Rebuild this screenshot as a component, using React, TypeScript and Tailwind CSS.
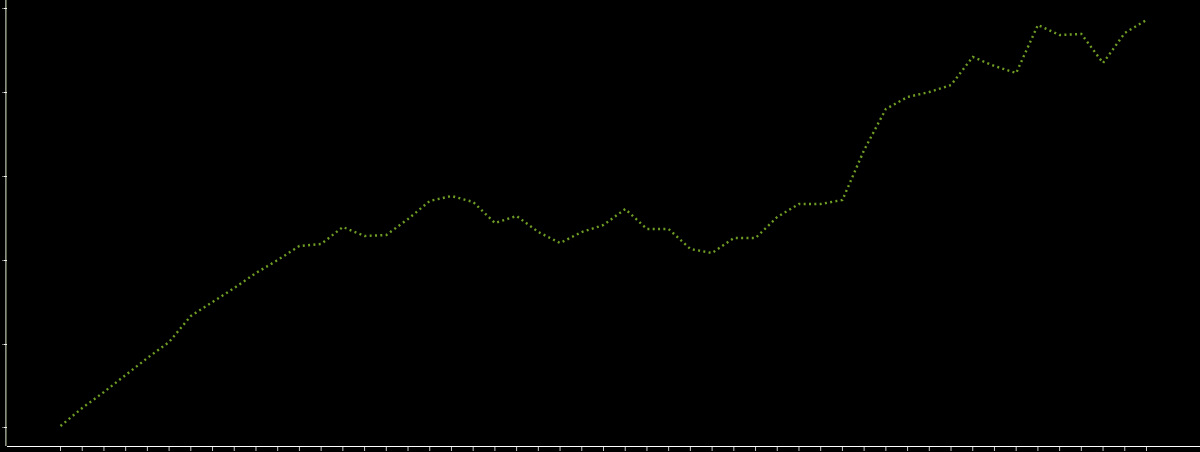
const VALUES = [
  426, 408, 392, 375, 358, 342, 316, 302, 288, 273, 260, 246, 244, 227, 236, 235, 219, 201, 196, 202, 223, 216, 232, 243, 232,
  225, 209, 229, 229, 249, 253, 238, 238, 217, 204, 204, 200, 150, 109, 97, 92, 85, 57, 66, 73, 25, 35, 34, 63, 33, 20,
]
const X0 = 60.5
const STEP = 21.72
const Y_TICKS = [8.5, 92.5, 176.5, 260.5, 344.5, 427.5]

const points = VALUES.map((y, i) => `${(X0 + STEP * i).toFixed(2)},${y}`).join(' ')

export default function App() {
  return (
    <div className="h-[452px] w-[1200px] overflow-hidden bg-black">
      <svg width="1200" height="452" viewBox="0 0 1200 452" className="block">
        <line x1="5.5" y1="0" x2="5.5" y2="446" stroke="#8a8c86" strokeWidth="1" />
        <line x1="6.5" y1="0" x2="6.5" y2="446" stroke="#56624a" strokeWidth="1" />
        {Y_TICKS.map((y) => (
          <g key={y}>
            <line x1="2" y1={y} x2="4" y2={y} stroke="#77796f" strokeWidth="1" />
            <line x1="4" y1={y} x2="7" y2={y} stroke="#f0f0f0" strokeWidth="1" />
          </g>
        ))}
        <line x1="7" y1="446.5" x2="1200" y2="446.5" stroke="#ffffff" strokeWidth="1" />
        {VALUES.map((_, i) => (
          <line key={i} x1={X0 + STEP * i} y1="447" x2={X0 + STEP * i} y2="451" stroke="#c8c8c8" strokeWidth="1" />
        ))}
        <polyline points={points} fill="none" stroke="#6f9c24" strokeWidth="2.4" strokeDasharray="2 3.33" />
      </svg>
    </div>
  )
}
